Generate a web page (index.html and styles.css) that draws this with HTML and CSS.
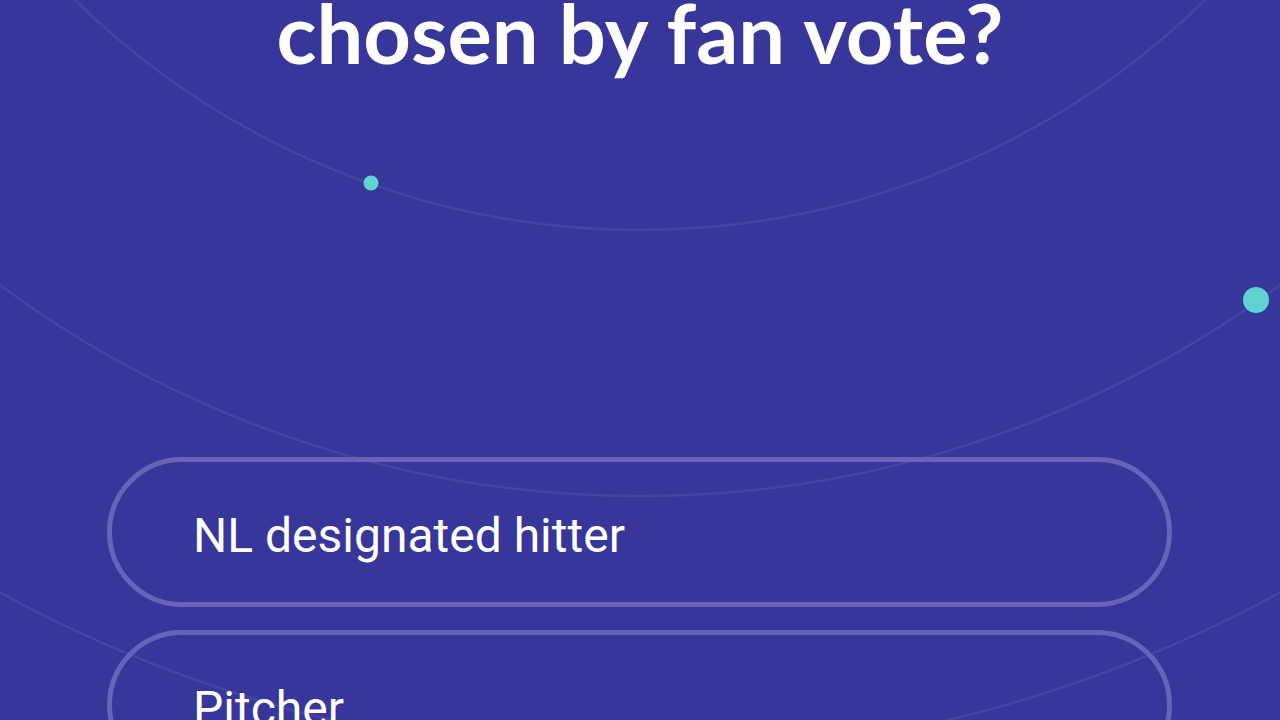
FILE: index.html
```html
<!DOCTYPE html>
<html>
<head>
<meta charset="utf-8">
<link rel="stylesheet" href="styles.css">
</head>
<body>
<div class="screen">
  <svg class="backdrop" width="1280" height="720" viewBox="0 0 1280 720">
    <circle cx="640" cy="-579" r="809" fill="none" stroke="#4444a5" stroke-width="2.5"/>
    <circle cx="640" cy="-579" r="1075" fill="none" stroke="#4444a5" stroke-width="2.5"/>
    <circle cx="640" cy="-579" r="1335" fill="none" stroke="#4444a5" stroke-width="2.5"/>
    <circle cx="371" cy="183" r="7.5" fill="#5ed3d0"/>
    <circle cx="1256" cy="300" r="13" fill="#5ed3d0"/>
  </svg>
  <main class="content">
    <h1 class="question">chosen by fan vote?</h1>
    <ul class="options">
      <li class="option">NL designated hitter</li>
      <li class="option">Pitcher</li>
    </ul>
  </main>
</div>
</body>
</html>
```
FILE: styles.css
```css
html, body {
  margin: 0;
  padding: 0;
  background: #37379b;
}
.screen {
  position: relative;
  width: 1280px;
  height: 720px;
  overflow: hidden;
  background: #37379b;
}
.backdrop {
  position: absolute;
  left: 0;
  top: 0;
}
.content {
  position: relative;
  display: flex;
  flex-direction: column;
}
.question {
  margin: -18px 0 0 0;
  text-align: center;
  font-family: "Lato", sans-serif;
  font-weight: 700;
  font-size: 83px;
  line-height: 100px;
  color: #ffffff;
}
.options {
  list-style: none;
  margin: 375px 0 0 0;
  padding: 0 108px 0 107px;
  display: flex;
  flex-direction: column;
  gap: 23px;
}
.option {
  box-sizing: border-box;
  height: 150px;
  border: 5px solid #6464b8;
  border-radius: 75px;
  padding: 6px 0 0 81px;
  display: flex;
  align-items: center;
  font-family: "Roboto", sans-serif;
  font-size: 48px;
  color: #ffffff;
}
```
